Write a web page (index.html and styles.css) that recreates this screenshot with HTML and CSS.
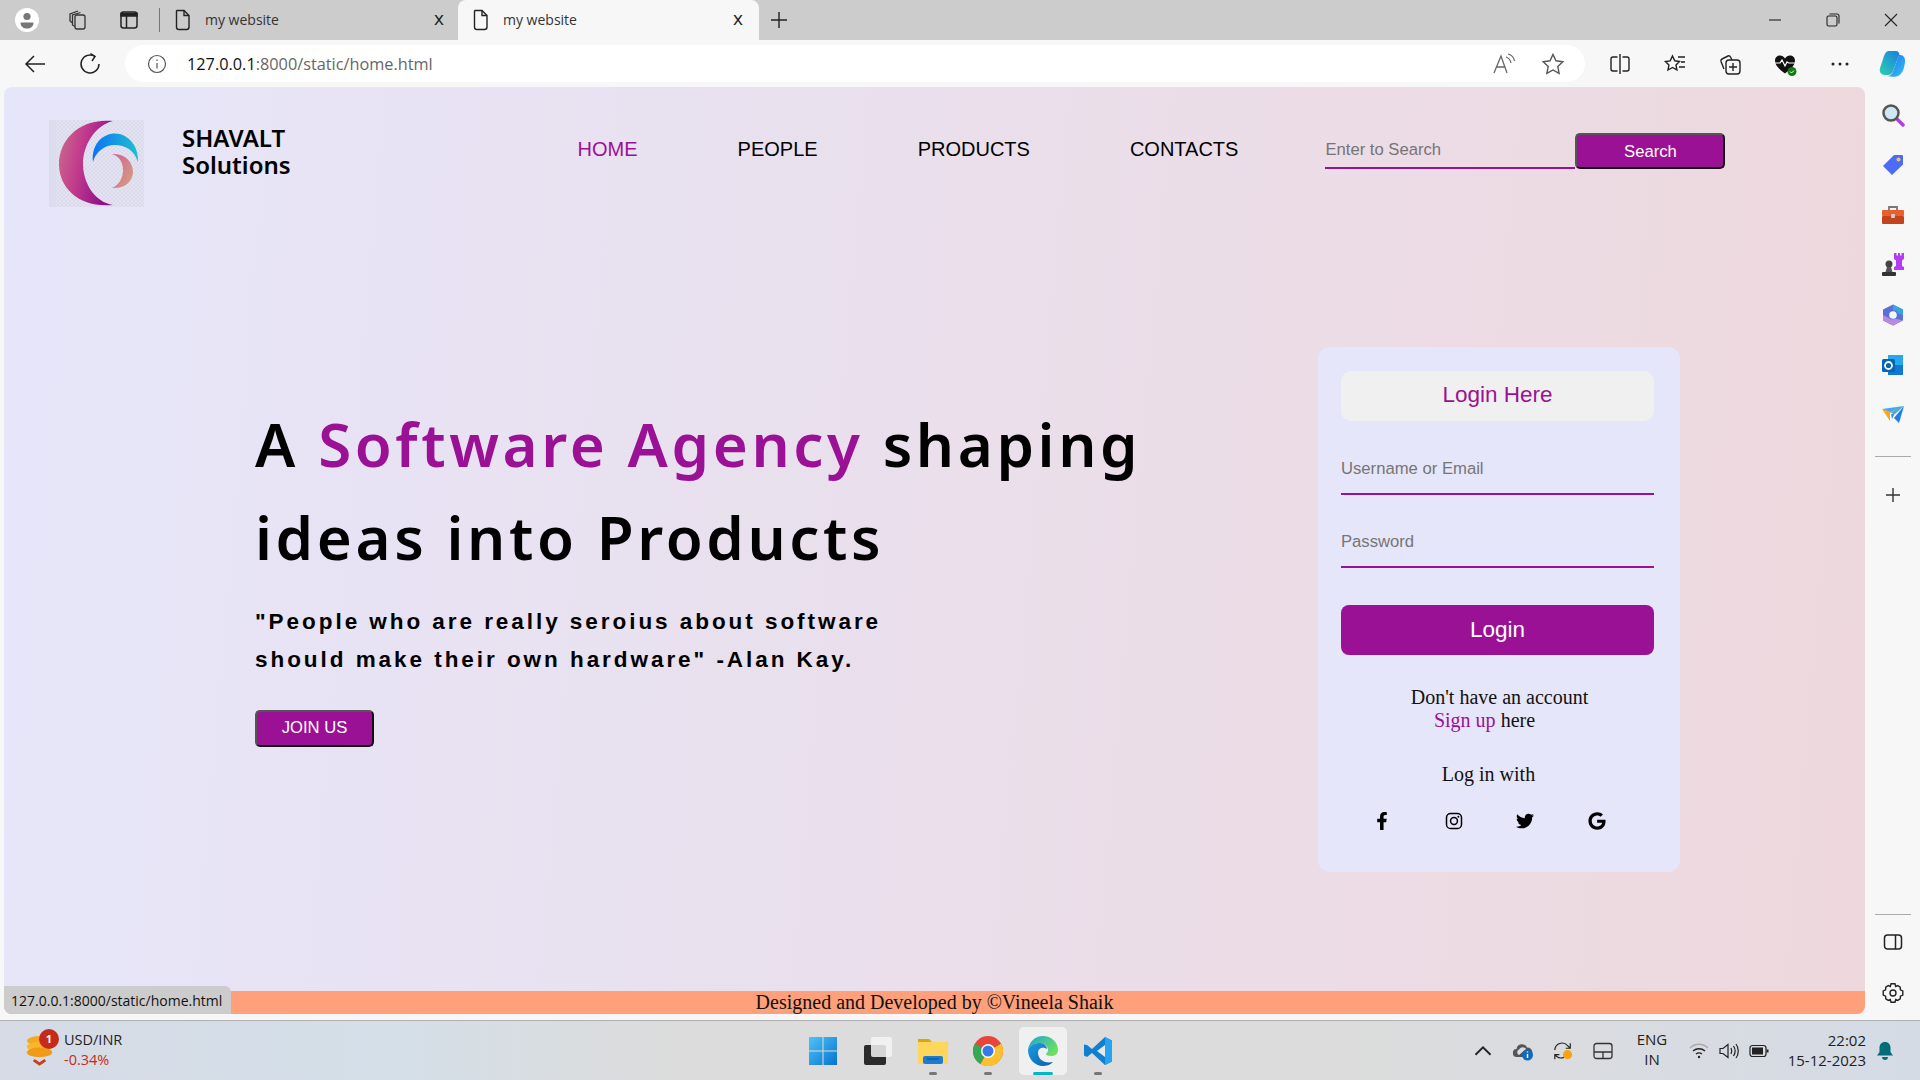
FILE: index.html
```html
<!DOCTYPE html>
<html>
<head>
    <title>my website</title>
    <link rel="stylesheet" href="styles.css">
</head>
<body>
    <!-- browser tabs -->
    <div class="tabstrip">
        <div class="strip-tools">
            <svg class="ico" viewBox="0 0 24 24"><circle cx="12" cy="12" r="12" fill="#fff"/><circle cx="12" cy="8.500" r="3.600" fill="#777"/><path d="M5.500 14.500h13c0 4-3 6-6.500 6s-6.500-2-6.500-6z" fill="#777"/></svg>
            <svg class="ico" viewBox="0 0 24 24" fill="none" stroke="#333" stroke-width="1.300"><rect x="9" y="7" width="10" height="14" rx="2"/><path d="M9 18.500 6.500 17V7l8-2.500M6.500 15 4 13V6l8-3"/></svg>
            <svg class="ico" viewBox="0 0 24 24" fill="none" stroke="#222" stroke-width="1.500"><rect x="4" y="4" width="16" height="16" rx="2.500"/><path d="M4 5.500h16V8H4z" fill="#222"/><path d="M9.500 8v12"/></svg>
        </div>
        <div class="tab tab-first">
            <svg class="tab-doc" viewBox="0 0 18 22" fill="none" stroke="#222" stroke-width="1.400"><path d="M3 1.500h7l5 5V18a2.500 2.500 0 0 1-2.500 2.500h-7.500A2.500 2.500 0 0 1 2.500 18V2z"/><path d="M10 1.500v5h5"/></svg>
            <span class="tab-name">my website</span>
            <span class="tab-close">x</span>
        </div>
        <div class="tab tab-active">
            <svg class="tab-doc" viewBox="0 0 18 22" fill="none" stroke="#222" stroke-width="1.400"><path d="M3 1.500h7l5 5V18a2.500 2.500 0 0 1-2.500 2.500h-7.500A2.500 2.500 0 0 1 2.500 18V2z"/><path d="M10 1.500v5h5"/></svg>
            <span class="tab-name">my website</span>
            <span class="tab-close">x</span>
        </div>
        <svg class="tab-plus" viewBox="0 0 18 18" stroke="#222" stroke-width="1.400"><path d="M9 1v16M1 9h16"/></svg>
        <div class="win-btns">
            <div class="win-btn"><svg viewBox="0 0 14 14" stroke="#222" fill="none" stroke-width="1.100"><path d="M1 7h12"/></svg></div>
            <div class="win-btn"><svg viewBox="0 0 14 14" stroke="#222" fill="none" stroke-width="1.100"><rect x="1" y="3" width="10" height="10" rx="1.500"/><path d="M3.500 1h7.500a2 2 0 0 1 2 2v7.500"/></svg></div>
            <div class="win-btn"><svg viewBox="0 0 14 14" stroke="#222" fill="none" stroke-width="1.100"><path d="M1 1l12 12M13 1 1 13"/></svg></div>
        </div>
    </div>

    <!-- address bar row -->
    <div class="toolbar">
        <svg class="ico" viewBox="0 0 24 24" fill="none" stroke="#222" stroke-width="1.500"><path d="M22 12H3M11 4l-8 8 8 8"/></svg>
        <svg class="ico" viewBox="0 0 24 24" fill="none" stroke="#222" stroke-width="1.500"><path d="M17 4.500A9 9 0 1 0 21 12"/><path d="M12.500 1.500 17 4.500l-3 4.500"/></svg>
        <div class="addressbar">
            <svg class="ico-info" viewBox="0 0 20 20" fill="none" stroke="#555" stroke-width="1.200"><circle cx="10" cy="10" r="8.500"/><path d="M10 9v5.500M10 5.500v1.500"/></svg>
            <span class="url"><b>127.0.0.1</b>:8000/static/home.html</span>
            <svg class="ico ico-read" viewBox="0 0 24 24" fill="none" stroke="#666" stroke-width="1.300"><path d="M2 21 9 4l6 17M4.500 15h9"/><path d="M14 5c3 1 4.500 3 5 6M16 2c4 1 6 3.500 6.500 7" stroke-width="1.200"/></svg>
            <svg class="ico" viewBox="0 0 24 24" fill="none" stroke="#555" stroke-width="1.400"><path d="m12 2.500 3 6.300 6.800.9-5 4.800 1.300 6.900-6.100-3.400-6.100 3.400 1.300-6.900-5-4.800 6.800-.9z"/></svg>
        </div>
        <div class="toolbar-right">
            <svg class="ico" viewBox="0 0 24 24" fill="none" stroke="#222" stroke-width="1.400"><path d="M9.500 5H5a2 2 0 0 0-2 2v10a2 2 0 0 0 2 2h4.500M14.500 5H19a2 2 0 0 1 2 2v10a2 2 0 0 1-2 2h-4.500M12 2v20"/></svg>
            <svg class="ico" viewBox="0 0 24 24" fill="none" stroke="#222" stroke-width="1.400"><path d="m9.500 4 2.300 4.800 4.700.7-3.500 3.400.9 5-4.400-2.400L5 18l.9-5-3.500-3.400 4.800-.7z"/><path d="M15 5h7M18 10h4M16 15h6"/></svg>
            <svg class="ico" viewBox="0 0 24 24" fill="none" stroke="#222" stroke-width="1.400"><path d="M6 17 3 9.500a2 2 0 0 1 1-2.500l6-3a2 2 0 0 1 2.500 1L14 8"/><rect x="8" y="8" width="14" height="14" rx="3"/><path d="M15 11v8M11 15h8"/></svg>
            <svg class="ico" viewBox="0 0 24 24"><path d="M12 21.500C6 17 2 13.500 2 8.500 2 5.500 4.300 3.500 7 3.500c2 0 3.800 1 5 3 1.200-2 3-3 5-3 2.700 0 5 2 5 5 0 5-4 8.500-10 13z" fill="#111"/><path d="M1 11h6l2-3 3 6 2-4 1.500 1H23" fill="none" stroke="#fff" stroke-width="1.200"/><circle cx="19" cy="19.500" r="4.500" fill="#107c10"/><path d="m17 19.500 1.500 1.500 2.500-2.500" fill="none" stroke="#fff" stroke-width="1"/></svg>
            <svg class="ico" viewBox="0 0 24 24" fill="#222"><circle cx="5" cy="12" r="1.500"/><circle cx="12" cy="12" r="1.500"/><circle cx="19" cy="12" r="1.500"/></svg>
            <svg class="ico-copilot" viewBox="0 0 28 28">
                <defs>
                    <linearGradient id="cop1" x1="0" y1="1" x2="1" y2="0"><stop offset="0" stop-color="#2bd0b0"/><stop offset="1" stop-color="#1a7fe0"/></linearGradient>
                    <linearGradient id="cop2" x1="0" y1="0" x2="1" y2="1"><stop offset="0" stop-color="#1f6ff0"/><stop offset="1" stop-color="#33c3f0"/></linearGradient>
                </defs>
                <path d="M11 1h7c2 0 3 1.500 3.500 3L15 21c-.8 2.500-2.500 4-5 4H7c-4 0-6-3-5-7L6 6c1-3 2.500-5 5-5z" fill="url(#cop1)"/>
                <path d="M21 5h1.500c3 0 5 3 4.500 7-.5 4.500-2 12-7 14-2 1-6 1-11 0 3 0 5-1.500 6-4.500z" fill="url(#cop2)"/>
            </svg>
        </div>
    </div>

    <div class="content-row">
        <div class="page">
            <header class="site-head">
                <svg class="logo" viewBox="0 0 95 87">
                    <defs>
                        <pattern id="chk" width="4" height="4" patternUnits="userSpaceOnUse"><rect width="4" height="4" fill="#e4e3f4"/><rect width="2" height="2" fill="#dadaea"/><rect x="2" y="2" width="2" height="2" fill="#dadaea"/></pattern>
                        <linearGradient id="lg1" x1="0" y1="0" x2="1" y2="0.300"><stop offset="0" stop-color="#c9708c"/><stop offset=".45" stop-color="#c33d8c"/><stop offset="1" stop-color="#90108a"/></linearGradient>
                        <linearGradient id="lg2" x1="0" y1="0" x2="1" y2="0"><stop offset="0" stop-color="#0a74f8"/><stop offset="1" stop-color="#1fc0cc"/></linearGradient>
                        <linearGradient id="lg3" x1="0" y1="0" x2="1" y2="1"><stop offset="0" stop-color="#d4608e"/><stop offset="1" stop-color="#d3a382"/></linearGradient>
                    </defs>
                    <rect width="95" height="87" fill="url(#chk)"/>
                    <rect width="7" height="87" fill="#dbdcee"/>
                    <path d="M64 1C30-2 10 20 10 44c0 24 20 44 54 41C45 82 34 62 34 44 34 26 45 6 64 1z" fill="url(#lg1)"/>
                    <path d="M44 42C42 24 54 13.500 66 13.500 79 13.500 90 26 89 42 85 30 76 25 66 25 56 25 47 31 44 42z" fill="url(#lg2)"/>
                    <path d="M63 34c13-1 21 8 21 18 0 9-8 17-21 16 7-3 11-10 11-18 0-8-4-14-11-16z" fill="url(#lg3)"/>
                </svg>
                <div class="brand"><div>SHAVALT</div><div>Solutions</div></div>
                <nav class="site-nav">
                    <a class="nav-on">HOME</a>
                    <a>PEOPLE</a>
                    <a>PRODUCTS</a>
                    <a>CONTACTS</a>
                </nav>
                <div class="search-box">
                    <input class="search-input" placeholder="Enter to Search">
                    <button class="search-btn">Search</button>
                </div>
            </header>

            <main class="hero">
                <div class="hero-text">
                    <h1>A <span class="purple">Software Agency</span> shaping<br>ideas into Products</h1>
                    <p class="quote">"People who are really seroius about software<br>should make their own hardware" -Alan Kay.</p>
                    <button class="join-btn">JOIN US</button>
                </div>
                <div class="login-card">
                    <div class="login-title">Login Here</div>
                    <input class="login-input" placeholder="Username or Email">
                    <input class="login-input" placeholder="Password">
                    <button class="login-btn">Login</button>
                    <p class="signup">Don't have an account<span class="signup-line"><a class="purple">Sign up</a> here</span></p>
                    <p class="login-with">Log in with</p>
                    <div class="socials">
                        <svg viewBox="0 0 320 512"><path d="M279.140 288l14.220-92.660h-88.910v-60.130c0-25.350 12.420-50.060 52.240-50.060h40.420V6.260S260.430 0 225.360 0c-73.220 0-121.080 44.380-121.080 124.720v70.620H22.890V288h81.390v224h100.170V288z"/></svg>
                        <svg viewBox="0 0 24 24" fill="none" stroke="#000" stroke-width="2"><rect x="2" y="2" width="20" height="20" rx="5.500"/><circle cx="12" cy="12" r="4.600"/><circle cx="17.800" cy="6.200" r="1.300" fill="#000" stroke="none"/></svg>
                        <svg viewBox="0 0 512 512"><path d="M459.370 151.716c.325 4.548.325 9.097.325 13.645 0 138.720-105.583 298.558-298.558 298.558-59.452 0-114.680-17.219-161.137-47.106 8.447.974 16.568 1.299 25.340 1.299 49.055 0 94.213-16.568 130.274-44.832-46.132-.975-84.792-31.188-98.112-72.772 6.498.974 12.995 1.624 19.818 1.624 9.421 0 18.843-1.300 27.614-3.573-48.081-9.747-84.143-51.980-84.143-102.985v-1.299c13.969 7.797 30.214 12.670 47.431 13.319-28.264-18.843-46.781-51.005-46.781-87.391 0-19.492 5.197-37.360 14.294-52.954 51.655 63.675 129.300 105.258 216.365 109.807-1.624-7.797-2.599-15.918-2.599-24.040 0-57.828 46.782-104.934 104.934-104.934 30.213 0 57.502 12.670 76.670 33.137 23.715-4.548 46.456-13.320 66.599-25.340-7.798 24.366-24.366 44.833-46.132 57.827 21.117-2.273 41.584-8.122 60.426-16.243-14.292 20.791-32.161 39.308-52.628 54.253z"/></svg>
                        <svg viewBox="0 0 488 512"><path d="M488 261.800C488 403.300 391.100 504 248 504 110.800 504 0 393.200 0 256S110.800 8 248 8c66.800 0 123 24.500 166.300 64.900l-67.500 64.900C258.500 52.600 94.300 116.600 94.300 256c0 86.500 69.100 156.600 153.700 156.600 98.200 0 135-70.400 140.800-106.900H248v-85.300h236.100c2.300 12.700 3.900 24.900 3.900 41.400z"/></svg>
                    </div>
                </div>
            </main>

            <footer class="site-foot">Designed and Developed by ©Vineela Shaik</footer>
            <div class="status-tip">127.0.0.1:8000/static/home.html</div>
        </div>

        <!-- edge sidebar -->
        <aside class="sidebar">
            <svg class="ico" viewBox="0 0 24 24"><path d="m15 15 7 7" stroke="#b23ee0" stroke-width="3.500" stroke-linecap="round"/><circle cx="10" cy="10" r="7.500" fill="#cfe6f5" stroke="#555" stroke-width="2.500"/></svg>
            <svg class="ico" viewBox="0 0 24 24"><path d="M13 2h8a1 1 0 0 1 1 1v8.500L11 22 2 13z" fill="#4d6cf5"/><circle cx="17.500" cy="6.500" r="2" fill="#f5c542"/></svg>
            <svg class="ico" viewBox="0 0 24 24"><path d="M8 7V4h8v3" fill="none" stroke="#777" stroke-width="1.800"/><rect x="1" y="7" width="22" height="6" rx="1" fill="#e8612c"/><rect x="1" y="13" width="22" height="8" rx="1" fill="#c2431c"/><rect x="10" y="11" width="4" height="4" rx="1" fill="#ccc"/></svg>
            <svg class="ico" viewBox="0 0 24 24"><circle cx="8" cy="11" r="3.500" fill="#444"/><path d="M6 14h4l1.500 5h-7z" fill="#555"/><rect x="1" y="19" width="14" height="4" rx="1" fill="#333"/><path d="M13 0h2.500v2.500H17V0h2v2.500h1.500V0H23v6l-2 1.500V13l2 1v3H13v-3l2-1V7.500L13 6z" fill="#b23ef0"/></svg>
            <svg class="ico" viewBox="0 0 24 24"><path d="M12 1.500 22 6.500v11l-10 5-10-5v-11z" fill="#5a6fd8"/><path d="M12 1.500 22 6.500v6l-5.500-2.500c-1-3-3.500-2.500-4.500-2.500z" fill="#38a6dc"/><path d="M2 12v5.500l10 5 10-5-8-2c-2 1.500-5 1-6-.5z" fill="#b78ae0"/><circle cx="12" cy="12" r="3.800" fill="#f7f7f7"/></svg>
            <svg class="ico" viewBox="0 0 24 24"><rect x="7" y="2" width="15" height="10" fill="#28a8ea"/><path d="M7 12h15v10H7z" fill="#0f78d4"/><rect x="1" y="6" width="13" height="13" rx="1.500" fill="#0364b8"/><circle cx="7.500" cy="12.500" r="3.500" fill="none" stroke="#fff" stroke-width="1.800"/></svg>
            <svg class="ico" viewBox="0 0 24 24"><path d="M1 6 23 3 14 11z" fill="#3fa9f5"/><path d="M23 3 18 20l-5-5z" fill="#1f7fe0"/><path d="M1 6l8 3 14-6L9 10v8z" fill="#f5a623"/><path d="m10 11 4-1-3 6z" fill="#2f8fe8"/></svg>
            <div class="side-line"></div>
            <svg class="ico" viewBox="0 0 24 24" stroke="#333" stroke-width="1.400"><path d="M12 5v14M5 12h14"/></svg>
            <div class="side-bottom">
                <div class="side-line"></div>
                <svg class="ico" viewBox="0 0 24 24" fill="none" stroke="#222" stroke-width="1.500"><rect x="3.500" y="5" width="17" height="14" rx="3"/><path d="M14.500 5v14"/></svg>
                <svg class="ico" viewBox="0 0 24 24" fill="none" stroke="#222" stroke-width="1.400"><circle cx="12" cy="12" r="3"/><path d="M10 2.800h4l.7 2.700 2-.9 2.500 1.500.2 2.700 2.400 1.100v4.200l-2.400 1.100-.2 2.700-2.500 1.500-2-.9-.7 2.700h-4l-.7-2.700-2 .9-2.500-1.500-.2-2.700-2.400-1.100V9.900l2.400-1.100.2-2.700 2.500-1.500 2 .9z"/></svg>
            </div>
        </aside>
    </div>

    <!-- windows taskbar -->
    <div class="taskbar">
        <div class="widget">
            <div class="coin">
                <svg viewBox="0 0 28 34"><ellipse cx="14" cy="7" rx="13" ry="5" fill="#f7a823"/><ellipse cx="14" cy="13" rx="13" ry="5" fill="#f8b62e"/><ellipse cx="14" cy="19" rx="13" ry="5" fill="#f09a16"/><path d="m8 27 6 4 6-4" fill="none" stroke="#c8401a" stroke-width="3"/></svg>
                <span class="coin-badge">1</span>
            </div>
            <div class="widget-text">USD/INR<br><span class="widget-down">-0.34%</span></div>
        </div>
        <div class="task-icons">
            <div class="task-slot">
                <svg viewBox="0 0 30 30"><defs><linearGradient id="win" x1="0" y1="0" x2="1" y2="1"><stop offset="0" stop-color="#4fc3f7"/><stop offset="1" stop-color="#0773cf"/></linearGradient></defs><path d="M1 1h13.500v13.500H1zM15.500 1H29v13.500H15.500zM1 15.500h13.500V29H1zM15.500 15.500H29V29H15.500z" fill="url(#win)"/></svg>
            </div>
            <div class="task-slot">
                <svg viewBox="0 0 30 30"><rect x="1" y="9" width="22" height="20" rx="2" fill="#2b2b2b"/><rect x="8" y="1" width="21" height="20" rx="2" fill="#f5f5f5" opacity=".85"/></svg>
            </div>
            <div class="task-slot">
                <svg viewBox="0 0 30 30"><path d="M0 3h11l3 3H30v7H0z" fill="#dca50a"/><rect y="6" width="30" height="22" rx="1" fill="#fdd65b"/><rect x="5" y="20" width="20" height="8" rx="2" fill="#1c7cd0"/><path d="M9 23h12" stroke="#0c4d8a" stroke-width="1"/></svg>
                <i class="task-dot"></i>
            </div>
            <div class="task-slot">
                <svg viewBox="0 0 30 30"><circle cx="15" cy="15" r="15" fill="#e8443a"/><path d="M15 15 2 7.500A15 15 0 0 0 7.500 28z" fill="#34a853"/><path d="M15 15 7.500 28A15 15 0 0 0 28 7.500z" fill="#fbc02d"/><path d="M28 7.500H15V15z" fill="#e8443a"/><circle cx="15" cy="15" r="7" fill="#fff"/><circle cx="15" cy="15" r="5.500" fill="#3b78e7"/></svg>
                <i class="task-dot"></i>
            </div>
            <div class="task-slot task-active">
                <svg viewBox="0 0 30 30"><defs><linearGradient id="edg" x1="0" y1="0" x2="1" y2="1"><stop offset="0" stop-color="#1b9de2"/><stop offset="1" stop-color="#0b5ea8"/></linearGradient><linearGradient id="edg2" x1="0" y1="0" x2="1" y2=".6"><stop offset="0" stop-color="#1ba4d8"/><stop offset="1" stop-color="#6de060"/></linearGradient></defs><path d="M15 0c8 0 15 6 15 14 0 4-3 6-7 6-3 0-5-1-5-2 0-1 2-1 2-4 0-4-4-7-8-7C7 7 2 10 0 14 1 6 7 0 15 0z" fill="url(#edg2)"/><path d="M0 14c2-5 7-7 12-7 4 0 7 3 7 6-3-2-9-2-9 4 0 6 6 11 15 9-3 3-7 4-10 4C7 30 0 23 0 14z" fill="url(#edg)"/></svg>
                <i class="task-dot task-dot-on"></i>
            </div>
            <div class="task-slot">
                <svg viewBox="0 0 30 30"><path d="M22 1 29 4.500v21L22 29 9 17l-5 4-3-1.500v-11L4 9l5 4z" fill="#0f7fcf"/><path d="M22 1 29 4.500v21L22 29z" fill="#26a4ef"/><path d="M22 9v12l-8-6z" fill="#e8e8e8"/></svg>
                <i class="task-dot"></i>
            </div>
        </div>
        <div class="tray">
            <div class="tray-slot"><svg viewBox="0 0 16 16" fill="none" stroke="#222" stroke-width="1.500"><path d="m2 11 6-6 6 6"/></svg></div>
            <div class="tray-slot"><svg viewBox="0 0 20 20"><path d="M4 16a4 4 0 0 1-.5-8A5.500 5.500 0 0 1 14 6.500a4.500 4.500 0 0 1 1 9.500z" fill="#555"/><path d="M6 14a3 3 0 0 1 0-5.500A4 4 0 0 1 13 8" fill="#ddd"/><circle cx="14.500" cy="14" r="5.500" fill="#0f6cbd"/><path d="M14.500 13v4M14.500 10.500v1" stroke="#fff" stroke-width="1.400"/></svg></div>
            <div class="tray-slot"><svg viewBox="0 0 22 22" fill="none" stroke="#222" stroke-width="1.300"><path d="M2 10a8 8 0 0 1 14-5l3 3M19 2.500V8h-5"/><path d="M12 18a8 8 0 0 1-8-1l-2-2M2 20v-5h5"/><circle cx="16" cy="15" r="5" fill="#f7a30c" stroke="none"/></svg></div>
            <div class="tray-slot"><svg viewBox="0 0 20 18" fill="none" stroke="#333" stroke-width="1.300"><rect x="1" y="1.500" width="18" height="15" rx="2.500"/><path d="M1 10h18M10 10v6.500"/></svg></div>
            <div class="tray-lang">ENG<br>IN</div>
            <div class="tray-small"><svg viewBox="0 0 20 16" fill="none" stroke="#222" stroke-width="1.400"><path d="M1 5c5-5 13-5 18 0" stroke="#aaa"/><path d="M4 8c3.500-3 8.500-3 12 0M7 11c2-1.500 4-1.500 6 0"/><circle cx="10" cy="14" r="1.200" fill="#222" stroke="none"/></svg></div>
            <div class="tray-small"><svg viewBox="0 0 20 16" fill="none" stroke="#222" stroke-width="1.200"><path d="M1 5.500v5h3l5 4v-13l-5 4zM12 5c1 2 1 4 0 6M14.500 3c2 3 2 7 0 10M17 1c3 4 3 10 0 14"/></svg></div>
            <div class="tray-small"><svg viewBox="0 0 20 14" fill="none" stroke="#222" stroke-width="1.200"><rect x="1" y="1.500" width="16" height="11" rx="2.500"/><rect x="3" y="3.500" width="11" height="7" fill="#222" stroke="none"/><path d="M18.500 5.500v3" stroke-width="2"/></svg></div>
            <div class="tray-clock">22:02<br>15-12-2023</div>
            <div class="tray-bell"><svg viewBox="0 0 18 20" fill="#006d77"><path d="M9 1c3.500 0 5.500 2.500 5.500 6v4l2.500 3.500H1L3.500 11V7C3.500 3.500 5.500 1 9 1z"/><path d="M6 16h6c0 2-1.500 3-3 3s-3-1-3-3z"/></svg></div>
        </div>
    </div>
</body>
</html>
```

FILE: styles.css
```css
* {
    box-sizing: border-box;
}
body {
    margin: 0;
    width: 1920px;
    height: 1080px;
    overflow: hidden;
    display: flex;
    flex-direction: column;
    font-family: "Liberation Sans", Arial, sans-serif;
    background-color: #f7f7f7;
}
svg {
    display: block;
    flex-shrink: 0;
}
.ico {
    width: 24px;
    height: 24px;
}
.purple {
    color: #9b1195;
}

/* tabs */
.tabstrip {
    height: 40px;
    flex-shrink: 0;
    display: flex;
    align-items: center;
    background-color: #cccccc;
    font-family: "Open Sans", sans-serif;
    font-size: 14px;
    color: #333;
}
.strip-tools {
    display: flex;
    gap: 27px;
    width: 159px;
    padding-left: 15px;
}
.tab {
    height: 40px;
    display: flex;
    align-items: center;
    gap: 13px;
    padding-left: 14px;
}
.tab-name {
    margin-top: -2px;
}
.tab-first {
    width: 299px;
    padding-right: 14px;
    border-left: 1px solid #777;
    height: 24px;
}
.tab-active {
    width: 301px;
    padding-right: 16px;
    background-color: #f7f7f7;
    border-radius: 8px 8px 0 0;
}
.tab-doc {
    width: 18px;
    height: 22px;
}
.tab-close {
    margin-left: auto;
    margin-top: -3px;
    font-size: 19px;
    line-height: 1;
    color: #222;
}
.tab-plus {
    width: 18px;
    height: 18px;
    margin-left: 11px;
}
.win-btns {
    display: flex;
    margin-left: auto;
}
.win-btn {
    width: 58px;
    display: flex;
    justify-content: center;
}
.win-btn svg {
    width: 14px;
    height: 14px;
}

/* address bar */
.toolbar {
    height: 47px;
    flex-shrink: 0;
    display: flex;
    align-items: center;
    gap: 31px;
    padding-left: 23px;
}
.addressbar {
    width: 1460px;
    height: 37px;
    margin-left: -8px;
    display: flex;
    align-items: center;
    padding: 0 20px 0 22px;
    background-color: #fff;
    border-radius: 19px;
}
.ico-info {
    width: 20px;
    height: 20px;
}
.url {
    margin-left: 20px;
    font-family: "Open Sans", sans-serif;
    font-size: 16.3px;
    color: #666;
}
.url b {
    font-weight: 400;
    color: #111;
}
.ico-read {
    margin-left: auto;
    margin-right: 25px;
}
.toolbar-right {
    display: flex;
    align-items: center;
    gap: 31px;
    margin-left: -8px;
}
.ico-copilot {
    width: 28px;
    height: 28px;
    margin-left: -5px;
}

/* page */
.content-row {
    flex: 1;
    min-height: 0;
    display: flex;
}
.page {
    position: relative;
    width: 1861px;
    margin: 0 0 6px 4px;
    display: flex;
    flex-direction: column;
    overflow: hidden;
    border-radius: 8px;
    background: linear-gradient(95deg, #e6e6fa, #eed8dd);
}
.site-head {
    display: flex;
    padding: 33px 0 0 45px;
}
.logo {
    width: 95px;
    height: 87px;
}
.brand {
    margin: 4px 0 0 38px;
    font-family: "Noto Sans", sans-serif;
    font-weight: 600;
    font-size: 24px;
    line-height: 27px;
    color: #000;
}
.site-nav {
    display: flex;
    gap: 100px;
    margin: 18px 0 0 287px;
    font-size: 20px;
    color: #000;
}
.nav-on {
    color: #9b1195;
}
.search-box {
    display: flex;
    margin: 13px 0 0 87px;
    align-items: flex-start;
}
.search-input {
    width: 250px;
    height: 36px;
    padding: 0;
    border: none;
    border-bottom: 2px solid #9b1195;
    background-color: transparent;
    font-family: "Liberation Sans", Arial, sans-serif;
    font-size: 16.67px;
}
.search-btn {
    width: 150px;
    height: 36px;
    padding-top: 2px;
    border: 2px solid;
    border-color: #555 #111 #111 #555;
    border-radius: 5px;
    background-color: #9b1195;
    color: #fff;
    font-family: "Liberation Sans", Arial, sans-serif;
    font-size: 16.67px;
}

/* hero */
.hero {
    flex: 1;
    display: flex;
    justify-content: space-between;
    padding: 140px 185px 0 251px;
}
.hero-text {
    padding-top: 51px;
}
h1 {
    margin: 0;
    font-family: "Noto Sans", sans-serif;
    font-weight: 600;
    font-size: 60px;
    line-height: 93px;
    letter-spacing: 3.6px;
    color: #000;
}
.quote {
    margin: 19px 0 0;
    font-weight: bold;
    font-size: 22.5px;
    line-height: 38px;
    letter-spacing: 2.95px;
    color: #000;
}
.join-btn {
    display: block;
    width: 119px;
    height: 37px;
    margin-top: 31px;
    padding-bottom: 3px;
    border: 2px solid;
    border-color: #555 #111 #111 #555;
    border-radius: 5px;
    background-color: #9b1195;
    color: #fff;
    font-family: "Liberation Sans", Arial, sans-serif;
    font-size: 16.67px;
}
.login-card {
    width: 362px;
    height: 525px;
    padding: 24px 26px 0 23px;
    display: flex;
    flex-direction: column;
    border-radius: 12px;
    background-color: #e6e6fa;
}
.login-title {
    height: 50px;
    line-height: 48px;
    text-align: center;
    font-size: 22.5px;
    color: #9b1195;
    background-color: #f0f0f0;
    border-radius: 10px;
}
.login-input {
    width: 100%;
    height: 51px;
    margin-top: 23px;
    padding: 0;
    border: none;
    border-bottom: 2px solid #9b1195;
    background-color: transparent;
    font-family: "Liberation Sans", Arial, sans-serif;
    font-size: 16.67px;
}
.login-input + .login-input {
    margin-top: 22px;
}
.login-btn {
    height: 50px;
    margin-top: 37px;
    border: none;
    border-radius: 8px;
    background-color: #9b1195;
    color: #fff;
    font-family: "Liberation Sans", Arial, sans-serif;
    font-size: 22.5px;
}
.signup {
    margin: 31px 0 0;
    padding-left: 4px;
    text-align: center;
    font-family: "Liberation Serif", "Times New Roman", serif;
    font-size: 20px;
    line-height: 23px;
    color: #111;
}
.signup-line {
    display: block;
    padding-right: 30px;
}
.login-with {
    margin: 31px 0 0;
    padding-right: 18px;
    text-align: center;
    font-family: "Liberation Serif", "Times New Roman", serif;
    font-size: 20px;
    line-height: 23px;
    color: #111;
}
.socials {
    display: flex;
    justify-content: space-between;
    margin-top: 26px;
    padding: 0 48px 0 32px;
}
.socials svg {
    width: 18px;
    height: 18px;
}

/* footer */
.site-foot {
    height: 23px;
    line-height: 23px;
    text-align: center;
    font-family: "Liberation Serif", "Times New Roman", serif;
    font-size: 20px;
    color: #111;
    background-color: #ffa07a;
}
.status-tip {
    position: absolute;
    left: 0;
    bottom: 0;
    width: 227px;
    height: 28px;
    line-height: 30px;
    padding-left: 7px;
    font-family: "Open Sans", sans-serif;
    font-size: 14px;
    color: #111;
    background-color: #cccccc;
    border-radius: 0 6px 0 0;
}

/* sidebar */
.sidebar {
    flex: 1;
    display: flex;
    flex-direction: column;
    align-items: center;
    gap: 26px;
    padding: 16px 0 15px;
}
.side-line {
    width: 36px;
    height: 1px;
    margin-top: 3px;
    background-color: #aaa;
}
.side-bottom {
    margin-top: auto;
    display: flex;
    flex-direction: column;
    align-items: center;
    gap: 15px;
}
.side-bottom .ico + .ico {
    margin-top: 12px;
}

/* taskbar */
.taskbar {
    height: 60px;
    flex-shrink: 0;
    display: grid;
    grid-template-columns: 1fr auto 1fr;
    align-items: center;
    border-top: 1px solid #b0b0b0;
    background: linear-gradient(90deg, #d6dbe6, #d4dfe8 20%, #dcdcdc 35%, #dcdcdc 70%, #d5dbe5);
    color: #222;
    font-family: "Open Sans", sans-serif;
}
.widget {
    display: flex;
    align-items: center;
    padding-left: 26px;
    gap: 11px;
}
.coin {
    position: relative;
    width: 27px;
    height: 33px;
}
.coin svg {
    width: 27px;
    height: 33px;
}
.coin-badge {
    position: absolute;
    top: -5px;
    right: -6px;
    width: 20px;
    height: 20px;
    border-radius: 50%;
    background-color: #c42b1c;
    color: #fff;
    font-size: 11px;
    font-weight: 700;
    line-height: 20px;
    text-align: center;
}
.widget-text {
    margin-top: -2px;
    font-size: 14.5px;
    line-height: 20px;
}
.widget-down {
    color: #c42b1c;
}
.task-icons {
    display: flex;
    gap: 7px;
}
.task-slot {
    position: relative;
    width: 48px;
    height: 48px;
    display: flex;
    align-items: center;
    justify-content: center;
    border-radius: 5px;
}
.task-slot svg {
    width: 30px;
    height: 30px;
}
.task-active {
    background-color: #f0f0f0;
}
.task-dot {
    position: absolute;
    left: 20px;
    bottom: 0;
    width: 8px;
    height: 3px;
    border-radius: 2px;
    background-color: #777;
}
.task-dot-on {
    left: 14px;
    width: 20px;
    background-color: #00b7c3;
}
.tray {
    display: flex;
    justify-content: flex-end;
    align-items: center;
    padding-right: 16px;
}
.tray-slot {
    width: 40px;
    display: flex;
    justify-content: center;
}
.tray-slot svg {
    width: 20px;
    height: 20px;
}
.tray-lang {
    width: 58px;
    margin: -3px 3px 0 0;
    text-align: center;
    font-size: 15px;
    line-height: 20px;
}
.tray-small {
    width: 30px;
    display: flex;
    justify-content: center;
}
.tray-small svg {
    width: 20px;
    height: 16px;
}
.tray-clock {
    width: 92px;
    margin-top: -2px;
    text-align: right;
    font-size: 15px;
    line-height: 20px;
}
.tray-bell {
    width: 38px;
    display: flex;
    justify-content: center;
}
.tray-bell svg {
    width: 18px;
    height: 20px;
}
```
